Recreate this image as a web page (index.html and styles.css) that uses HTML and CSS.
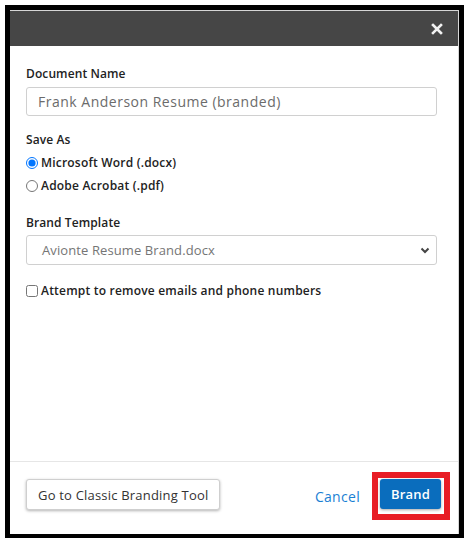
FILE: index.html
```html
<!DOCTYPE html>
<html lang="en">
<head>
    <meta charset="UTF-8">
    <title>Brand Document</title>
    <link rel="stylesheet" href="styles.css">
</head>
<body>
    <div class="frame">
        <div class="modal">
            <div class="modal-header">
                <button class="close" aria-label="Close">
                    <svg width="12" height="12" viewBox="0 0 12 12"><path d="M2 2L10 10M10 2L2 10" stroke="#f2f2f2" stroke-width="2.6" stroke-linecap="square"/></svg>
                </button>
            </div>

            <div class="modal-body">
                <label class="field-label" for="docName">Document Name</label>
                <input type="text" id="docName" class="text-input" value="Frank Anderson Resume (branded)">

                <div class="field-label group-label">Save As</div>
                <label class="option"><input type="radio" name="saveAs" checked> Microsoft Word (.docx)</label>
                <label class="option"><input type="radio" name="saveAs"> Adobe Acrobat (.pdf)</label>

                <div class="field-label template-label">Brand Template</div>
                <div class="text-input select" role="combobox" tabindex="0">
                    <span>Avionte Resume Brand.docx</span>
                    <svg class="chevron" width="10" height="7" viewBox="0 0 10 7"><path d="M1.5 1.5L5 5L8.5 1.5" fill="none" stroke="#444" stroke-width="2"/></svg>
                </div>

                <label class="option check"><input type="checkbox"> Attempt to remove emails and phone numbers</label>
            </div>

            <div class="modal-footer">
                <button class="btn btn-default">Go to Classic Branding Tool</button>
                <div class="actions">
                    <a href="#" class="link">Cancel</a>
                    <div class="highlight">
                        <button class="btn btn-primary">Brand</button>
                    </div>
                </div>
            </div>
        </div>
    </div>
</body>
</html>
```

FILE: styles.css
```css
body {
    margin: 0;
    font-family: "Open Sans", Arial, sans-serif;
    color: #222;
    background: #fff;
}
.frame {
    box-sizing: border-box;
    width: 459px;
    height: 533px;
    margin: 5px 0 0 5px;
    border: 5px solid #000;
}
.modal {
    height: 100%;
    display: flex;
    flex-direction: column;
    border-top: 1px solid #d6d6d6;
    border-right: 1px solid #d6d6d6;
    background: #fff;
}
.modal-header {
    height: 35px;
    flex-shrink: 0;
    background-color: #464646;
    display: flex;
    justify-content: flex-end;
    align-items: center;
    padding-right: 15px;
}
.close {
    background: none;
    border: none;
    padding: 0;
    width: 12px;
    height: 12px;
    cursor: pointer;
}
.close svg {
    display: block;
}
.modal-body {
    flex: 1;
    padding: 20px 21px 0 16px;
}
.field-label {
    display: block;
    font-size: 12px;
    font-weight: 600;
    line-height: 16px;
    margin-bottom: 5px;
    letter-spacing: 0.1px;
}
.group-label {
    margin-bottom: 3px;
}
.text-input {
    box-sizing: border-box;
    width: 100%;
    height: 29px;
    padding: 0 11px;
    border: 1px solid #d0d0d0;
    border-radius: 3px;
    font-family: inherit;
    font-size: 14px;
    letter-spacing: 0.5px;
    color: #6b6b6b;
    margin-bottom: 16px;
}
.option {
    display: flex;
    align-items: center;
    font-size: 12px;
    font-weight: 600;
    letter-spacing: 0.2px;
    height: 23px;
}
.option input {
    margin: 0 3px 0 0;
    width: 12px;
    height: 12px;
}
.template-label {
    margin-top: 18px;
}
.select {
    display: flex;
    justify-content: space-between;
    align-items: center;
    height: 30px;
    margin-top: -1px;
    padding: 0 6px 0 15px;
    font-size: 13px;
    letter-spacing: 0.1px;
    color: #757575;
    background: #fff;
    cursor: pointer;
}
.check {
    margin-top: -2px;
}
.modal-footer {
    display: flex;
    justify-content: space-between;
    align-items: flex-start;
    border-top: 1px solid #e6e6e6;
    padding: 10px 8px 14px 16px;
}
.btn {
    font-family: inherit;
    font-size: 13px;
    letter-spacing: 0.2px;
    height: 31px;
    border-radius: 3px;
    cursor: pointer;
}
.btn-default {
    margin-top: 7px;
    padding: 0 11px;
    background: #fff;
    color: #333;
    border: 1px solid #cfcfcf;
    box-shadow: 0 1px 3px rgba(0, 0, 0, 0.3);
}
.actions {
    display: flex;
    align-items: center;
}
.link {
    color: #1a7fd4;
    font-size: 14px;
    letter-spacing: 0.3px;
    text-decoration: none;
    margin-right: 12px;
}
.highlight {
    border: 6px solid #e81d25;
    padding: 1px 3px 5px 2px;
}
.btn-primary {
    display: block;
    width: 61px;
    height: 30px;
    background-color: #0a6dbd;
    color: #fff;
    font-weight: 600;
    border: none;
    box-shadow: 0 1px 3px rgba(0, 0, 0, 0.35);
}
```
